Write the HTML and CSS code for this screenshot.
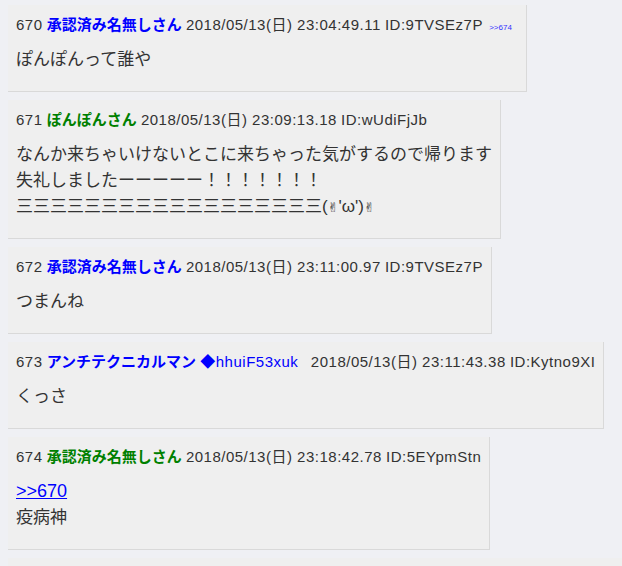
FILE: index.html
```html
<!DOCTYPE html>
<html lang="ja">
  <head>
    <meta charset="UTF-8" />
    <meta name="viewport" content="width=device-width, initial-scale=1.0" />
    <title>スレッド</title>
    <link rel="stylesheet" href="styles.css">
  </head>
  <body>
    <div class="thread">
      <div class="post" id="670">
        <div class="meta">
          <span class="number">670</span>
          <span class="name name-mail"><b>承認済み名無しさん</b></span>
          <span class="date">2018/05/13(日) 23:04:49.11</span>
          <span class="uid">ID:9TVSEz7P</span>
          <span class="backlinks"><a href="#674">&gt;&gt;674</a></span>
        </div>
        <div class="message">ぽんぽんって誰や</div>
      </div>
      <div class="post" id="671">
        <div class="meta">
          <span class="number">671</span>
          <span class="name"><b>ぽんぽんさん</b></span>
          <span class="date">2018/05/13(日) 23:09:13.18</span>
          <span class="uid">ID:wUdiFjJb</span>
        </div>
        <div class="message">
          なんか来ちゃいけないとこに来ちゃった気がするので帰ります<br />
          失礼しましたーーーーー！！！！！！！<br />
          三三三三三三三三三三三三三三三三三三(<span class="hand">✌︎</span>'ω')<span class="hand">✌︎</span>
        </div>
      </div>
      <div class="post" id="672">
        <div class="meta">
          <span class="number">672</span>
          <span class="name name-mail"><b>承認済み名無しさん</b></span>
          <span class="date">2018/05/13(日) 23:11:00.97</span>
          <span class="uid">ID:9TVSEz7P</span>
        </div>
        <div class="message">つまんね</div>
      </div>
      <div class="post" id="673">
        <div class="meta">
          <span class="number">673</span>
          <span class="name name-mail"><b>アンチテクニカルマン</b> <span class="trip">◆hhuiF53xuk</span>&nbsp;&nbsp;</span>
          <span class="date">2018/05/13(日) 23:11:43.38</span>
          <span class="uid">ID:Kytno9XI</span>
        </div>
        <div class="message">くっさ</div>
      </div>
      <div class="post" id="674">
        <div class="meta">
          <span class="number">674</span>
          <span class="name"><b>承認済み名無しさん</b></span>
          <span class="date">2018/05/13(日) 23:18:42.78</span>
          <span class="uid">ID:5EYpmStn</span>
        </div>
        <div class="message">
          <a href="#670" class="reply-link">&gt;&gt;670</a><br />
          疫病神
        </div>
      </div>
      <div class="post post-wide" id="675">
        <div class="meta">
          <span class="number">675</span>
          <span class="name"><b>承認済み名無しさん</b></span>
          <span class="date">2018/05/13(日) 23:20:05.12</span>
          <span class="uid">ID:Qm3xRt8a</span>
        </div>
        <div class="message">ぽんぽんは帰ったのか、またどこかで会おう。こういう流れ嫌いじゃないけどもう少し落ち着いてほしい</div>
      </div>
    </div>
  </body>
</html>
```

FILE: styles.css
```css
html {
  overflow: hidden;
}
body {
  margin: 0;
  padding: 5px 8px 0;
  background-color: #eff0f4;
  color: #333;
  font-family: "Liberation Sans", "Noto Sans CJK JP", sans-serif;
}
.thread {
  display: flex;
  flex-direction: column;
  align-items: flex-start;
}
.post {
  background-color: #efefef;
  border-right: 1px solid #d9d9d9;
  border-bottom: 1px solid #d9d9d9;
  padding: 8px;
  margin-bottom: 8px;
}
.post-wide {
  white-space: nowrap;
}
.meta {
  font-size: 15px;
  line-height: 24px;
  white-space: nowrap;
}
/* latin parts of the header run a little wide */
.number,
.date,
.uid,
.trip {
  letter-spacing: 0.5px;
}
.name b {
  font-weight: bold;
}
.name {
  color: #008000;
}
.name-mail {
  color: #0000ff;
}
.backlinks {
  margin-left: 2px;
  padding-right: 6px;
}
.backlinks a {
  color: #3333ff;
  font-size: 8px;
  line-height: 1;
  text-decoration: none;
}
.message {
  font-size: 17px;
  line-height: 26px;
  margin: 10px 0;
}
.hand {
  font-family: "DejaVu Sans", sans-serif;
  font-size: 13px;
  line-height: 1;
  color: #222;
}
.reply-link {
  color: #0000ff;
  font-size: 18px;
  line-height: 1;
}
```
